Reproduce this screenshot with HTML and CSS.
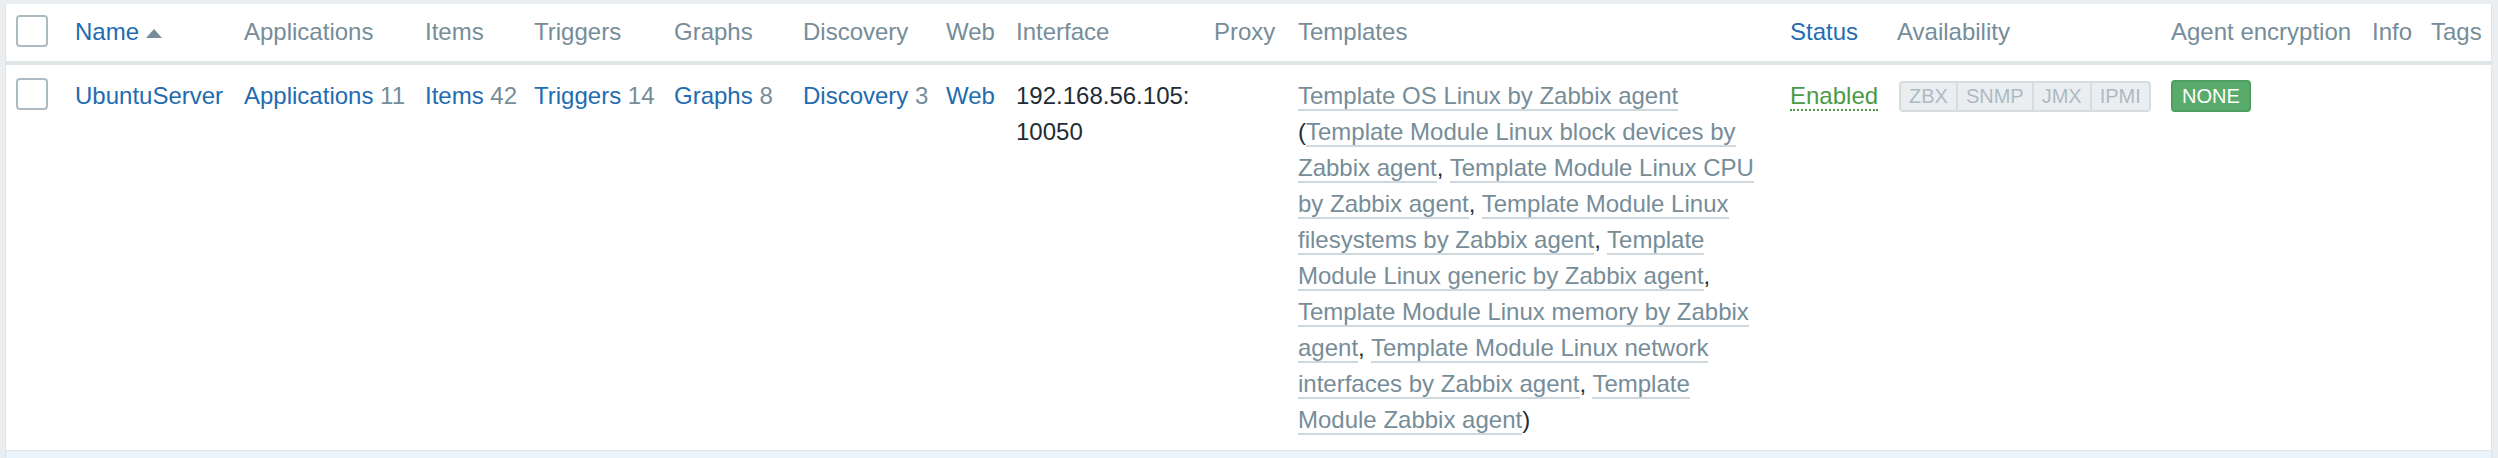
FILE: index.html
```html
<!DOCTYPE html>
<html lang="en">
<head>
<meta charset="utf-8">
<title>Hosts</title>
<link rel="stylesheet" href="styles.css">
</head>
<body>
<div class="page">
  <table class="list">
    <colgroup>
      <col class="c-cb"><col class="c-name"><col class="c-apps"><col class="c-items"><col class="c-trig"><col class="c-graphs"><col class="c-disc"><col class="c-web"><col class="c-iface"><col class="c-proxy"><col class="c-tpl"><col class="c-status"><col class="c-avail"><col class="c-enc"><col class="c-info"><col class="c-tags">
    </colgroup>
    <thead>
      <tr>
        <th><span class="cb cb-head"></span></th>
        <th><a class="link">Name</a><span class="arrow-up"></span></th>
        <th>Applications</th>
        <th>Items</th>
        <th>Triggers</th>
        <th>Graphs</th>
        <th>Discovery</th>
        <th>Web</th>
        <th>Interface</th>
        <th>Proxy</th>
        <th>Templates</th>
        <th><a class="link">Status</a></th>
        <th>Availability</th>
        <th>Agent encryption</th>
        <th>Info</th>
        <th>Tags</th>
      </tr>
    </thead>
    <tbody>
      <tr>
        <td><span class="cb"></span></td>
        <td><a class="link">UbuntuServer</a></td>
        <td><a class="link">Applications</a> <span class="count">11</span></td>
        <td><a class="link">Items</a> <span class="count">42</span></td>
        <td><a class="link">Triggers</a> <span class="count">14</span></td>
        <td><a class="link">Graphs</a> <span class="count">8</span></td>
        <td><a class="link">Discovery</a> <span class="count">3</span></td>
        <td><a class="link">Web</a></td>
        <td class="wrap">192.168.56.105: 10050</td>
        <td></td>
        <td class="wrap"><a class="tpl">Template OS Linux by Zabbix agent</a> (<a class="tpl">Template Module Linux block devices by Zabbix agent</a>, <a class="tpl">Template Module Linux CPU by Zabbix agent</a>, <a class="tpl">Template Module Linux filesystems by Zabbix agent</a>, <a class="tpl">Template Module Linux generic by Zabbix agent</a>, <a class="tpl">Template Module Linux memory by Zabbix agent</a>, <a class="tpl">Template Module Linux network interfaces by Zabbix agent</a>, <a class="tpl">Template Module Zabbix agent</a>)</td>
        <td><a class="enabled">Enabled</a></td>
        <td><span class="avail"><span>ZBX</span><span>SNMP</span><span>JMX</span><span>IPMI</span></span></td>
        <td><span class="badge-green">NONE</span></td>
        <td></td>
        <td></td>
      </tr>
    </tbody>
  </table>
  <div class="footer"></div>
</div>
</body>
</html>
```
FILE: styles.css
```css
html, body {
  margin: 0;
  padding: 0;
}
body {
  background: #ebeef0;
  font-family: "Liberation Sans", Arial, sans-serif;
  font-size: 24px;
  color: #1f2c33;
  overflow: hidden;
}
.page {
  margin: 4px 6px 0 5px;
  background: #fff;
  border-left: 1px solid #dfe4e7;
  border-right: 1px solid #dfe4e7;
}
.list {
  width: 100%;
  table-layout: fixed;
  border-collapse: separate;
  border-spacing: 0;
}
.c-cb { width: 59px; }
.c-name { width: 169px; }
.c-apps { width: 181px; }
.c-items { width: 109px; }
.c-trig { width: 140px; }
.c-graphs { width: 129px; }
.c-disc { width: 143px; }
.c-web { width: 70px; }
.c-iface { width: 198px; }
.c-proxy { width: 84px; }
.c-tpl { width: 492px; }
.c-status { width: 107px; }
.c-avail { width: 274px; }
.c-enc { width: 201px; }
.c-info { width: 59px; }
.c-tags { width: 70px; }

.list th {
  text-align: left;
  font-weight: normal;
  color: #768d99;
  padding: 10px 10px 11px;
  line-height: 36px;
  border-bottom: 4px solid #dfe4e7;
  white-space: nowrap;
  vertical-align: top;
}
.list td {
  padding: 13px 10px 12px;
  line-height: 36px;
  vertical-align: top;
  border-bottom: 1px solid #dfe4e7;
  white-space: nowrap;
}
.list td.wrap {
  white-space: normal;
}
.link {
  color: #1f6cb0;
  text-decoration: none;
}
.count {
  color: #768d99;
}
.arrow-up {
  display: inline-block;
  width: 0;
  height: 0;
  border-left: 8px solid transparent;
  border-right: 8px solid transparent;
  border-bottom: 9px solid #768d99;
  margin-left: 7px;
  margin-bottom: 2px;
  vertical-align: baseline;
}
.cb {
  display: inline-block;
  width: 32px;
  height: 32px;
  box-sizing: border-box;
  border: 2px solid #acbbc2;
  border-radius: 4px;
  background: #fff;
  vertical-align: top;
}
.cb-head {
  margin-top: 1px;
}
.tpl {
  color: #768d99;
  text-decoration: none;
  border-bottom: 2px solid #cfd8dc;
}
.enabled {
  color: #4a9a48;
  text-decoration: none;
  border-bottom: 2px dotted #4a9a48;
}
.avail {
  display: inline-flex;
  vertical-align: top;
  margin-top: 3px;
  margin-left: 2px;
}
.avail span {
  font-size: 20px;
  line-height: 27px;
  padding: 0 8px;
  background: #ebeef0;
  color: #acbbc2;
  border: 2px solid #d5dde0;
  border-left: none;
}
.avail span:first-child {
  border-left: 2px solid #d5dde0;
  border-radius: 4px 0 0 4px;
}
.avail span:last-child {
  border-radius: 0 4px 4px 0;
}
.badge-green {
  display: inline-block;
  vertical-align: top;
  margin-top: 2px;
  font-size: 20px;
  line-height: 28px;
  padding: 0 9px;
  color: #fff;
  background: #59ab6b;
  border: 2px solid #4e9e5f;
  border-radius: 4px;
}
.footer {
  height: 7px;
  background: #eaf4fd;
}
```
